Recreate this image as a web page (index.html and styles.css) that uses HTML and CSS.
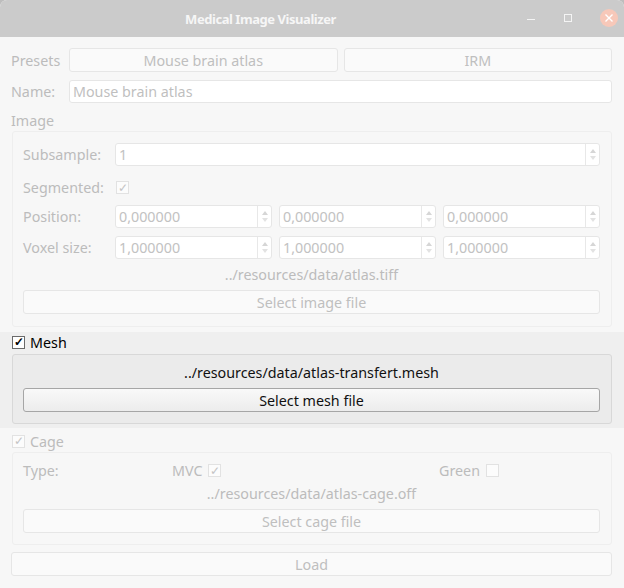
FILE: index.html
```html
<!DOCTYPE html>
<html>
<head>
<meta charset="utf-8">
<link rel="stylesheet" href="styles.css">
</head>
<body>
<div class="window">
  <div class="titlebar">
    <span class="title">Medical Image Visualizer</span>
    <div class="wbtns">
      <span class="wmin"></span>
      <span class="wmax"></span>
      <span class="wclose">
        <svg width="18" height="18" viewBox="0 0 18 18"><path d="M5.5 5.5 L12.5 12.5 M12.5 5.5 L5.5 12.5" stroke="#fff" stroke-width="1.4" fill="none"/></svg>
      </span>
    </div>
  </div>

  <div class="content">
    <div class="row presets">
      <span class="lbl top">Presets</span>
      <div class="btnpair">
        <div class="btn dis">Mouse brain atlas</div>
        <div class="btn dis">IRM</div>
      </div>
    </div>
    <div class="row name">
      <span class="lbl top">Name:</span>
      <div class="input dis">Mouse brain atlas</div>
    </div>
    <div class="sect-title">Image</div>
    <div class="group">
      <div class="grow subs">
        <span class="glbl">Subsample:</span>
        <div class="spin wide"><span class="val">1</span><span class="arrows"><i class="up"></i><i class="dn"></i></span></div>
      </div>
      <div class="grow seg">
        <span class="glbl">Segmented:</span>
        <span class="cb dis">✓</span>
      </div>
      <div class="grow pos">
        <span class="glbl">Position:</span>
        <div class="spins">
          <div class="spin"><span class="val">0,000000</span><span class="arrows"><i class="up"></i><i class="dn"></i></span></div>
          <div class="spin"><span class="val">0,000000</span><span class="arrows"><i class="up"></i><i class="dn"></i></span></div>
          <div class="spin"><span class="val">0,000000</span><span class="arrows"><i class="up"></i><i class="dn"></i></span></div>
        </div>
      </div>
      <div class="grow vox">
        <span class="glbl">Voxel size:</span>
        <div class="spins">
          <div class="spin"><span class="val">1,000000</span><span class="arrows"><i class="up"></i><i class="dn"></i></span></div>
          <div class="spin"><span class="val">1,000000</span><span class="arrows"><i class="up"></i><i class="dn"></i></span></div>
          <div class="spin"><span class="val">1,000000</span><span class="arrows"><i class="up"></i><i class="dn"></i></span></div>
        </div>
      </div>
      <div class="path dis-text img-path">../resources/data/atlas.tiff</div>
      <div class="btn dis fullbtn">Select image file</div>
    </div>
  </div>

  <div class="meshband">
    <div class="checkrow">
      <span class="cb on">✓</span><span class="cbtext">Mesh</span>
    </div>
    <div class="group meshgroup">
      <div class="path mesh-path">../resources/data/atlas-transfert.mesh</div>
      <div class="btn active fullbtn">Select mesh file</div>
    </div>
  </div>

  <div class="content">
    <div class="checkrow cagerow">
      <span class="cb dis">✓</span><span class="cbtext dis-text">Cage</span>
    </div>
    <div class="group cagegroup">
      <div class="typerow">
        <span class="glbl tlbl">Type:</span>
        <span class="opt mvc">MVC <span class="cb dis">✓</span></span>
        <span class="opt green">Green <span class="cb dis"></span></span>
      </div>
      <div class="path dis-text cage-path">../resources/data/atlas-cage.off</div>
      <div class="btn dis fullbtn">Select cage file</div>
    </div>
    <div class="btn dis loadbtn">Load</div>
  </div>
</div>
</body>
</html>
```

FILE: styles.css
```css
* { box-sizing: border-box; }
html, body { margin: 0; padding: 0; }
body {
  width: 624px;
  height: 588px;
  background: #bdbdbd;
  font-family: "Noto Sans", "Open Sans", sans-serif;
  font-size: 14.3px;
  color: #bcbcbc;
  overflow: hidden;
}
.window {
  width: 624px;
  height: 588px;
  background: #f7f7f7;
  border-radius: 7px 7px 0 0;
  overflow: hidden;
}
.titlebar {
  height: 37px;
  background: #cbcbcb;
  position: relative;
  display: flex;
  align-items: center;
  justify-content: center;
  padding-right: 103px;
}
.title {
  color: #f6f6f6;
  font-weight: bold;
  font-size: 13px;
  letter-spacing: -0.45px;
}
.wbtns {
  position: absolute;
  right: 6px;
  top: 9px;
  display: flex;
  align-items: center;
}
.wmin {
  display: block;
  width: 8px;
  height: 1px;
  background: #f4f4f4;
  margin-top: 2px;
  margin-right: 29px;
}
.wmax {
  display: block;
  width: 8px;
  height: 8px;
  border: 1px solid #f4f4f4;
  margin-right: 28px;
}
.wclose {
  display: flex;
  width: 18px;
  height: 18px;
  border-radius: 50%;
  background: #f7c8b9;
}
.content {
  padding: 0 12px 0 11px;
}
.row {
  display: flex;
  align-items: center;
}
.lbl.top { width: 58px; flex: none; }
.presets { margin-top: 11px; height: 24px; }
.btnpair { flex: 1; display: flex; gap: 6px; height: 24px; }
.btnpair .btn { flex: 1; }
.btn {
  display: flex;
  align-items: center;
  justify-content: center;
  height: 24px;
  border-radius: 3px;
}
.btn.dis {
  border: 1px solid #e6e6e6;
  background: #fafafa;
  color: #bfbfbf;
}
.btn.active {
  border: 1px solid #a6a6a6;
  background: linear-gradient(#f9f9f9, #ececec);
  color: #101010;
}
.name { margin-top: 8px; height: 23px; }
.input {
  flex: 1;
  height: 23px;
  border: 1px solid #e6e6e6;
  border-radius: 3px;
  background: #ffffff;
  display: flex;
  align-items: center;
  padding-left: 3px;
  color: #bfbfbf;
}
.sect-title {
  margin-top: 8px;
  height: 20px;
  line-height: 20px;
}
.group {
  margin-left: 1px;
  border: 1px solid #eeeeee;
  border-radius: 3px;
  padding: 11px 11px 12px 10px;
}
.grow {
  display: flex;
  align-items: center;
  height: 23px;
}
.glbl { width: 92px; flex: none; }
.seg { margin-top: 10px; }
.pos { margin-top: 6px; }
.vox { margin-top: 8px; }
.spins { flex: 1; display: flex; gap: 7px; }
.spin {
  flex: 1;
  height: 23px;
  border: 1px solid #e6e6e6;
  border-radius: 3px;
  background: #fff;
  display: flex;
  align-items: stretch;
}
.spin.wide { flex: 1; }
.spin .val {
  flex: 1;
  display: flex;
  align-items: center;
  padding-left: 3px;
  color: #c2c2c2;
}
.arrows {
  width: 14px;
  border-left: 1px solid #e8e8e8;
  display: flex;
  flex-direction: column;
  align-items: center;
  justify-content: center;
  gap: 3px;
}
.arrows i {
  display: block;
  width: 0;
  height: 0;
  border-left: 3.5px solid transparent;
  border-right: 3.5px solid transparent;
}
.arrows .up { border-bottom: 4px solid #d6d6d6; }
.arrows .dn { border-top: 4px solid #e2e2e2; }
.cb {
  display: inline-flex;
  align-items: center;
  justify-content: center;
  width: 13px;
  height: 13px;
  font-size: 12px;
  line-height: 1;
  flex: none;
}
.cb.dis {
  border: 1px solid #e2e2e2;
  background: #fcfcfc;
  color: #c4c4c4;
}
.cb.on {
  border: 1px solid #6a6a6a;
  background: #fff;
  color: #000;
  font-weight: bold;
}
.seg .cb { margin-left: 1px; }
.path {
  height: 18px;
  line-height: 18px;
  text-align: center;
}
.img-path { margin-top: 7px; }
.dis-text { color: #bcbcbc; }
.fullbtn { margin-top: 6px; }
.meshband {
  margin-top: 5px;
  background: #efefef;
  padding: 3px 12px 4px 12px;
  height: 96px;
}
.checkrow {
  display: flex;
  align-items: center;
  height: 14px;
  gap: 5px;
}
.meshband .cbtext { color: #000; }
.meshgroup {
  margin-left: 0;
  margin-top: 5px;
  height: 70px;
  background: #ebebeb;
  border: 1px solid #d8d8d8;
  padding: 9px 11px 0 10px;
}
.mesh-path { color: #111; }
.cagerow { margin-top: 6px; margin-left: 1px; }
.cagegroup {
  margin-top: 4px;
  height: 93px;
  padding-top: 9px;
}
.typerow {
  display: flex;
  align-items: center;
  height: 17px;
  position: relative;
}
.tlbl { width: 149px; }
.opt { display: inline-flex; align-items: center; gap: 6px; }
.green { margin-left: auto; margin-right: 101px; }
.cage-path { margin-top: 6px; }
.loadbtn { margin-top: 7px; height: 24px; }
```
